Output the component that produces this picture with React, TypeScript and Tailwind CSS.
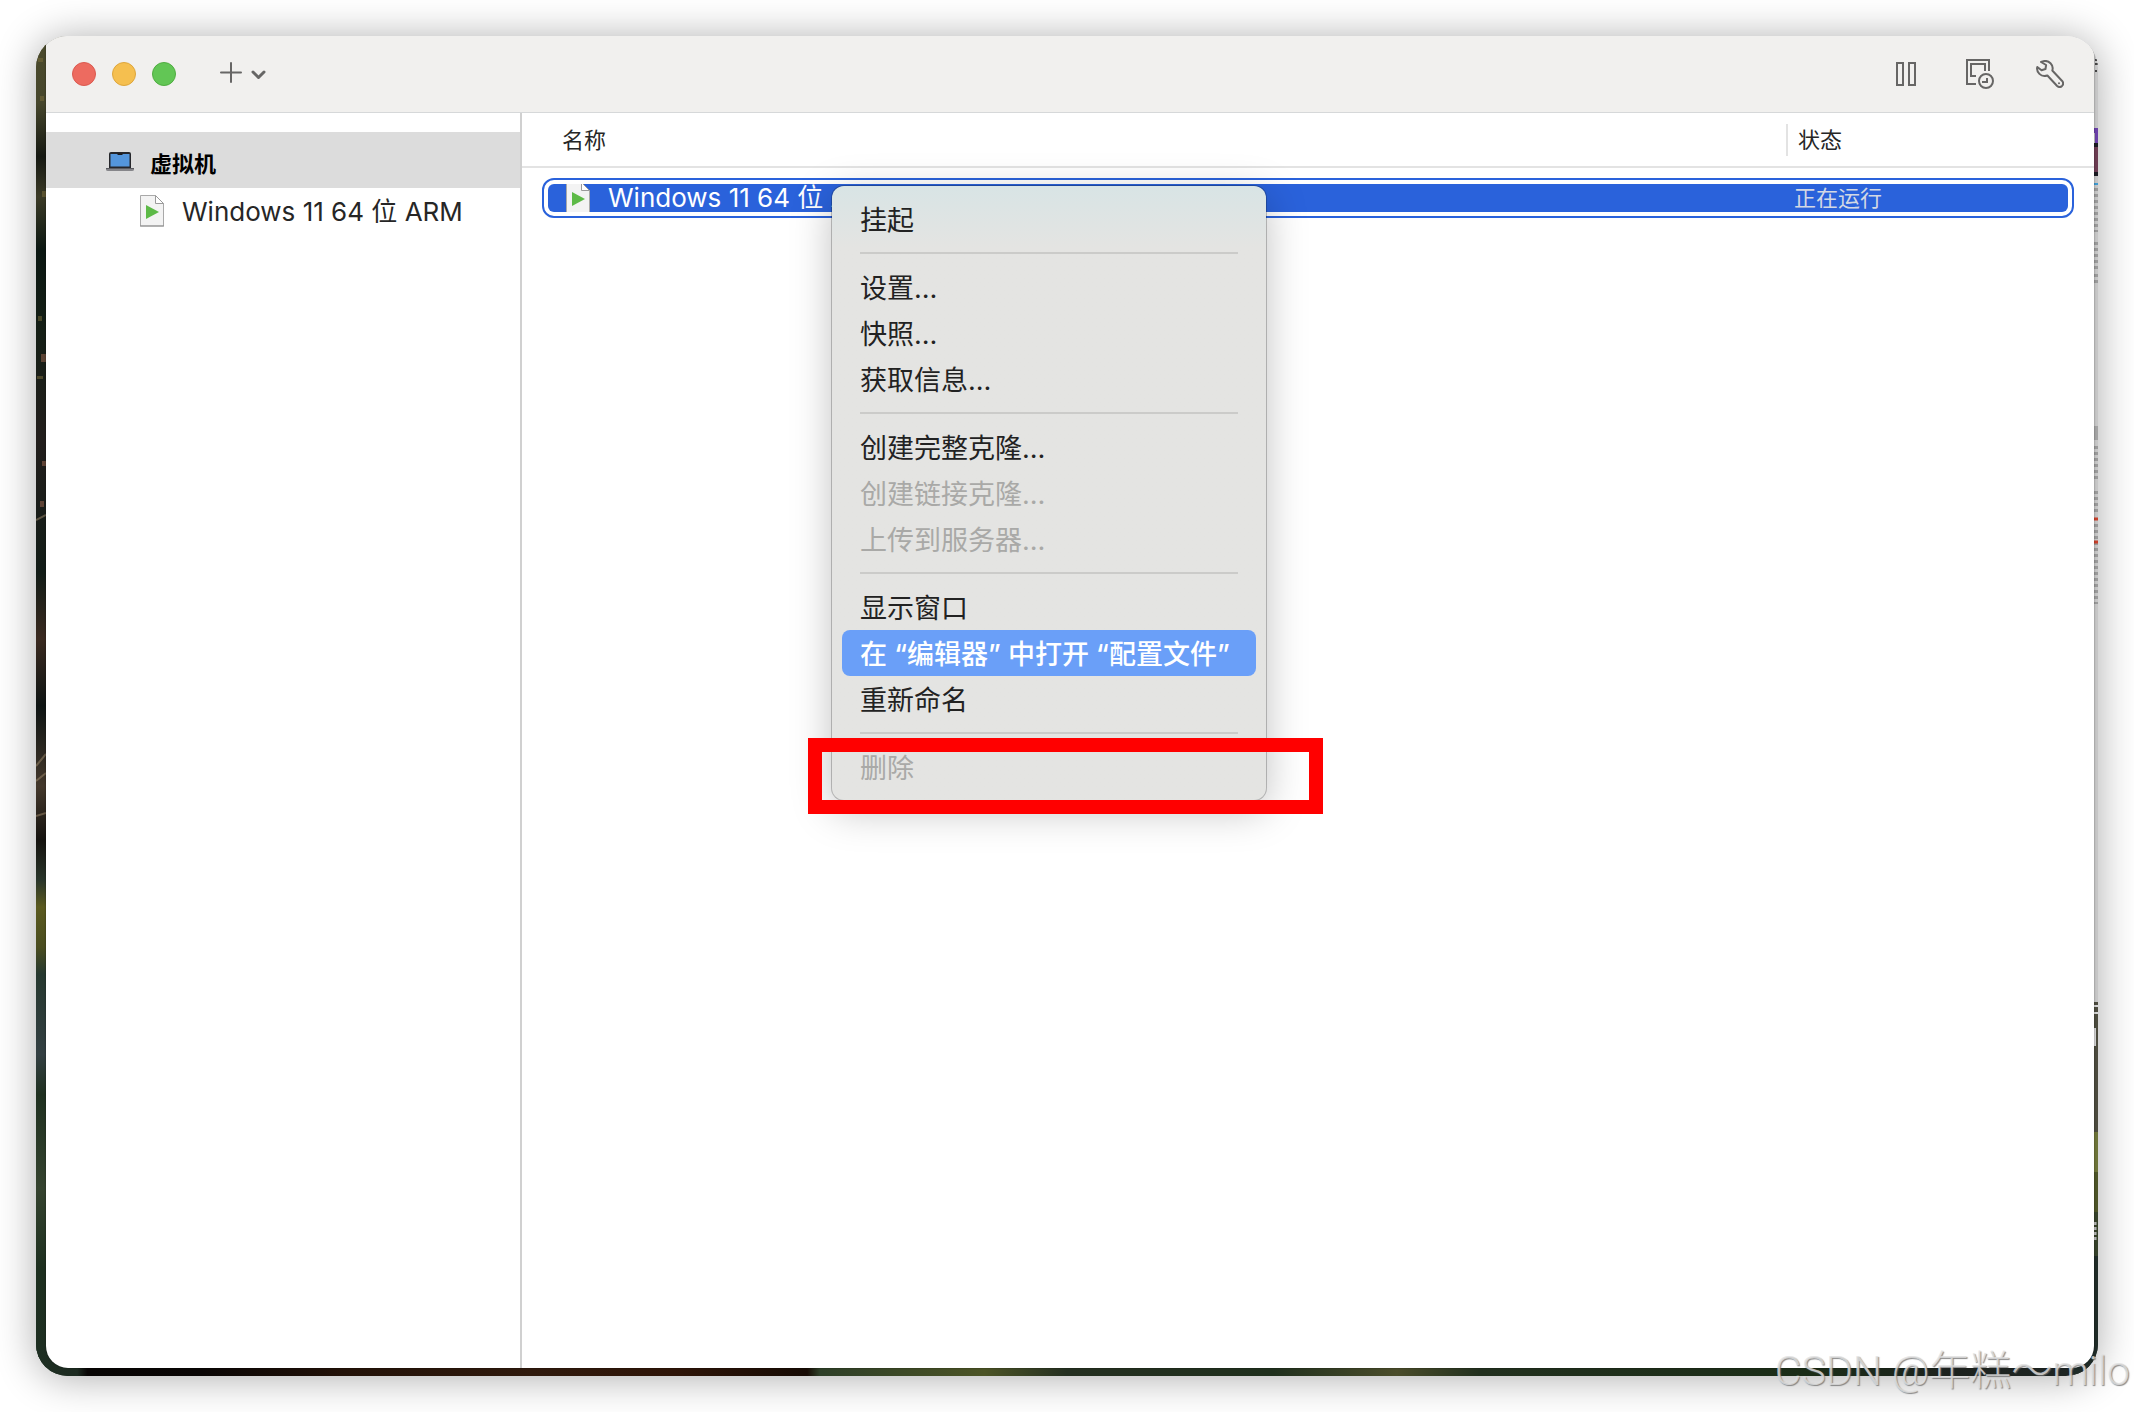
import { useState } from 'react'
import clsx from 'clsx'

type MenuItem = { label: string; disabled?: boolean }

const menuGroups: MenuItem[][] = [
  [{ label: '挂起' }],
  [{ label: '设置…' }, { label: '快照…' }, { label: '获取信息…' }],
  [
    { label: '创建完整克隆…' },
    { label: '创建链接克隆…', disabled: true },
    { label: '上传到服务器…', disabled: true },
  ],
  [{ label: '显示窗口' }, { label: '在 “编辑器” 中打开 “配置文件”' }, { label: '重新命名' }],
  [{ label: '删除', disabled: true }],
]

function LaptopIcon() {
  return (
    <svg width="28" height="20" viewBox="0 0 28 20" className="shrink-0">
      <rect x="3" y="0" width="22" height="18" rx="2" fill="#26272b" />
      <rect x="4.5" y="2" width="19" height="12.5" fill="#5496dc" />
      <rect x="11.5" y="1.5" width="5" height="1.5" fill="#1a1b1e" />
      <path d="M0 16.5h28v1q0 1.5-2 1.5H2q-2 0-2-1.5z" fill="#86868a" />
      <path d="M0 16.5h28" stroke="#5b5b60" />
    </svg>
  )
}

function VmFileIcon() {
  return (
    <svg width="24" height="32" viewBox="0 0 24 32" className="shrink-0">
      <path d="M.5.5h15l8 8v22.5H.5z" fill="#f3f3f3" stroke="#a9a9a9" />
      <path d="M15.5.5v8h8z" fill="#fff" stroke="#9a9a9a" strokeLinejoin="round" />
      <path d="M0 31h24" stroke="#8d8d8d" />
      <path d="M6 10l13 7-13 7z" fill="#5dba47" />
    </svg>
  )
}

function PauseIcon() {
  return (
    <svg width="20" height="24" viewBox="0 0 20 24" fill="none" stroke="currentColor" strokeWidth="2">
      <path d="M1 1h6v22H1zM13 1h6v22h-6z" />
    </svg>
  )
}

function SnapshotIcon() {
  return (
    <svg width="28" height="30" viewBox="0 0 28 30" fill="none" stroke="currentColor" strokeWidth="2">
      <path d="M10 25H1V1h22v11" />
      <path d="M10 17H5V5h14v7" />
      <circle cx="20" cy="22" r="7" />
      <path d="M21 19v4h-5" />
    </svg>
  )
}

function WrenchIcon() {
  return (
    <svg width="28" height="28" viewBox="0 0 28 28" fill="none" stroke="currentColor" strokeWidth="2" strokeLinejoin="round">
      <path d="M5 2C8 .6 12 .8 14.5 3.2c2.2 2.2 2.6 4.8 1.8 7.3l9.6 10.2c1.5 1.7 1.5 3.8.1 5.2-1.5 1.4-3.6 1.3-5.1-.2L11.4 15.5C8.5 16.5 5.5 16 3.4 13.9 1.3 11.8.6 9.5 1.3 7l4.2 3.2 4-1.2.6-4z" />
      <circle cx="23" cy="23.3" r="1" fill="currentColor" stroke="none" />
    </svg>
  )
}

// desktop picture peeking out around the window
function Wallpaper() {
  return (
    <>
      <div className="absolute inset-y-0 left-0 w-10 bg-linear-to-b from-[#4a4a2c] via-[#11100f] to-[#1d2f20]" />
      <svg className="absolute inset-y-0 left-0 h-full w-[10px]" viewBox="0 0 10 1340" preserveAspectRatio="none">
        <defs>
          <linearGradient id="leaves" x2="0" y2="1">
            <stop offset="0" stopColor="#4c4c2d" />
            <stop offset=".05" stopColor="#46462c" />
            <stop offset=".09" stopColor="#151812" />
            <stop offset=".12" stopColor="#3b3a26" />
            <stop offset=".16" stopColor="#0b1712" />
            <stop offset=".22" stopColor="#151f16" />
            <stop offset=".3" stopColor="#221e1c" />
            <stop offset=".4" stopColor="#121c17" />
            <stop offset=".45" stopColor="#3a2a20" />
            <stop offset=".5" stopColor="#0e1413" />
            <stop offset=".56" stopColor="#44382c" />
            <stop offset=".6" stopColor="#15130f" />
            <stop offset=".63" stopColor="#29352a" />
            <stop offset=".65" stopColor="#5b5a1f" />
            <stop offset=".68" stopColor="#4a4d20" />
            <stop offset=".7" stopColor="#26382f" />
            <stop offset=".76" stopColor="#333f42" />
            <stop offset=".79" stopColor="#1f3020" />
            <stop offset=".86" stopColor="#35432f" />
            <stop offset=".92" stopColor="#1d2f1f" />
            <stop offset="1" stopColor="#1e2e22" />
          </linearGradient>
        </defs>
        <rect width="10" height="1340" fill="url(#leaves)" />
        <g opacity=".5">
          <path d="M2 22h5v4H2zM4 60h4v5H4zM6 155h4v6H6zM2 280h4v5H2zM1 340h6v3H1z" fill="#7b6e3b" />
          <path d="M5 318h5v8H5zM6 425h4v5H6zM4 465h4v6H4z" fill="#a06a52" />
          <path d="M0 484l10-5M0 730l10-12M0 745l10-8M0 780l10-3" stroke="#a08b6c" strokeWidth="2" />
        </g>
      </svg>
      <svg className="absolute bottom-0 left-0 h-8 w-full" viewBox="0 0 2062 32" preserveAspectRatio="none">
        <defs>
          <linearGradient id="ground">
            <stop offset="0" stopColor="#1e2f22" />
            <stop offset=".02" stopColor="#1d2b21" />
            <stop offset=".025" stopColor="#080504" />
            <stop offset=".08" stopColor="#0a0605" />
            <stop offset=".15" stopColor="#231208" />
            <stop offset=".24" stopColor="#301a0d" />
            <stop offset=".31" stopColor="#2f1508" />
            <stop offset=".374" stopColor="#170b04" />
            <stop offset=".38" stopColor="#2e3f28" />
            <stop offset=".46" stopColor="#4c5426" />
            <stop offset=".5" stopColor="#253021" />
            <stop offset=".6" stopColor="#20301d" />
            <stop offset=".66" stopColor="#4b4d2b" />
            <stop offset=".7" stopColor="#22301e" />
            <stop offset=".86" stopColor="#1b2d17" />
            <stop offset=".93" stopColor="#1d221e" />
            <stop offset="1" stopColor="#1f2725" />
          </linearGradient>
        </defs>
        <rect width="2062" height="32" fill="url(#ground)" />
      </svg>
      <svg className="absolute top-0 right-0 h-full w-6" viewBox="0 0 24 1340" preserveAspectRatio="none">
        <rect width="24" height="970" fill="#c6c6c6" />
        <path d="M21 24h3M21 28h3M21 35h2" stroke="#444" strokeWidth="2" />
        <path d="M20 92h4v20h-3V97h-1z" fill="#6a3fa8" />
        <rect x="20" y="107" width="4" height="30" fill="#6c3c52" />
        <path d="M20 109h4M20 138h4" stroke="#1b1b22" strokeWidth="4" />
        <path d="M20 148h4" stroke="#3f9ad0" strokeWidth="2" />
        <path d="M22 152v44M22 206v28M22 238v10M22 410v34M22 455v24M22 488v80" stroke="#9a9a9a" strokeWidth="4" strokeDasharray="3 3" />
        <rect x="20" y="390" width="4" height="14" fill="#a3a3a3" />
        <path d="M20 483h4M20 506h4" stroke="#c9402b" strokeWidth="3" />
        <rect y="966" width="24" height="340" fill="#4c4b3e" />
        <path d="M20 970h4M20 977h4M21 992v18" stroke="#d5d5d5" strokeWidth="2" />
        <rect y="1096" width="24" height="40" fill="#6d7438" />
        <rect y="1136" width="24" height="40" fill="#4d5427" />
        <rect y="1176" width="24" height="44" fill="#36412a" />
        <path d="M21 1186v18" stroke="#b8b8b8" strokeWidth="3" strokeDasharray="3 2" />
        <rect y="1220" width="24" height="120" fill="#1f2b27" />
      </svg>
    </>
  )
}

function ContextMenu() {
  const [active, setActive] = useState('在 “编辑器” 中打开 “配置文件”')

  return (
    <div
      role="menu"
      className="absolute top-[150px] left-[786px] w-[434px] rounded-xl bg-[#e4e4e2] bg-linear-to-b from-[#d8e4e5] to-[#e4e4e2] to-10% p-[10px] shadow-[0_0_0_1px_rgba(0,0,0,0.22),0_10px_40px_rgba(0,0,0,0.25)]"
    >
      {menuGroups.map((group, i) => (
        <div key={i}>
          {i > 0 && <hr className="mx-[18px] my-[10px] h-[2px] border-0 bg-[#cbcbc9]" />}
          {group.map((item) => (
            <button
              key={item.label}
              type="button"
              role="menuitem"
              disabled={item.disabled}
              onMouseEnter={() => setActive(item.label)}
              className={clsx(
                'block h-[46px] w-full rounded-lg px-[18px] pt-1 text-left text-[27px] leading-[42px] whitespace-nowrap',
                item.disabled && 'text-[#a9a9a7]',
                !item.disabled && active === item.label && 'bg-[#6a9ff8] font-medium text-white',
                !item.disabled && active !== item.label && 'text-[#222]',
              )}
            >
              {item.label}
            </button>
          ))}
        </div>
      ))}
      {/* red marker around the delete entry */}
      <div className="pointer-events-none absolute top-[552px] -left-6 h-[76px] w-[515px] border-[14px] border-[#ff0000]" />
    </div>
  )
}

export default function App() {
  return (
    <div className="relative flex h-screen overflow-hidden bg-white p-9 font-['Inter','Noto_Sans_CJK_SC',sans-serif] text-[#262626]">
      <div className="relative flex flex-1 overflow-hidden rounded-[32px] pr-1 pb-2 pl-[10px] shadow-[0_2px_40px_rgba(0,0,0,0.33)]">
        <Wallpaper />

        <div className="relative flex flex-1 flex-col overflow-hidden rounded-[22px] rounded-tl-[10px] bg-white shadow-[0_0_2px_rgba(0,0,0,0.5)]">
          <header className="flex h-[77px] shrink-0 items-center border-b border-[#d6d8d9] bg-[#f1f0ee] pr-[30px] pl-[26px] text-[#676665]">
            <div className="flex gap-4">
              <button type="button" aria-label="关闭" className="size-6 rounded-full border border-[#db5a50] bg-[#ed6b60]" />
              <button type="button" aria-label="最小化" className="size-6 rounded-full border border-[#dea63c] bg-[#f5bf4f]" />
              <button type="button" aria-label="缩放" className="size-6 rounded-full border border-[#50ad41] bg-[#62c655]" />
            </div>
            <button type="button" aria-label="添加" className="ml-[43px]">
              <svg width="48" height="24" viewBox="0 0 48 24" fill="none" stroke="currentColor" strokeLinecap="round">
                <path d="M12 1v19M2 10.5h20" strokeWidth="2" />
                <path d="M34 10l5.5 5.500L45 10" strokeWidth="3" strokeLinejoin="round" />
              </svg>
            </button>
            <div className="ml-auto flex items-center">
              <button type="button" aria-label="挂起" className="mr-[50px]">
                <PauseIcon />
              </button>
              <button type="button" aria-label="快照" className="mr-[42px]">
                <SnapshotIcon />
              </button>
              <button type="button" aria-label="设置">
                <WrenchIcon />
              </button>
            </div>
          </header>

          <div className="flex min-h-0 flex-1">
            <aside className="w-[476px] shrink-0 border-r-2 border-[#d0d0d0] pt-[19px]">
              <div className="flex h-14 items-center gap-4 bg-[#dcdcdc] pt-1 pl-[60px]">
                <LaptopIcon />
                <span className="pt-1 text-[22px] font-bold text-black">虚拟机</span>
              </div>
              <a href="#vm" className="flex h-[46px] items-center gap-[18px] pl-[94px] text-[26px]">
                <VmFileIcon />
                Windows 11 64 位 ARM
              </a>
            </aside>

            <main className="min-w-0 flex-1">
              <table className="block">
                <thead className="block border-b-2 border-[#e3e3e3] text-[22px] leading-8">
                  <tr className="grid h-[53px] grid-cols-[1fr_308px] items-center">
                    <th className="pl-[40px] text-left font-normal">名称</th>
                    <th className="border-l-2 border-[#e3e3e3] pl-[10px] text-left font-normal">状态</th>
                  </tr>
                </thead>
                <tbody className="block px-[26px] pt-4">
                  <tr className="grid h-7 grid-cols-[1fr_282px] rounded-md bg-[#2a62db] outline-2 outline-offset-4 outline-[#2a62db]">
                    <td className="flex h-7 items-center gap-[18px] pl-[18px] text-[26px] leading-7 text-white">
                      <span className="flex h-7 items-center overflow-hidden">
                        <VmFileIcon />
                      </span>
                      Windows 11 64 位 ARM
                    </td>
                    <td className="pl-2 text-[22px] leading-7 text-[#d3d8e4]">正在运行</td>
                  </tr>
                </tbody>
              </table>
            </main>
          </div>

          <ContextMenu />
        </div>
      </div>

      <p className="absolute right-1 bottom-3 font-['Roboto','Noto_Sans_CJK_SC',sans-serif] text-[41px] leading-[58px] font-light whitespace-nowrap text-[#e2e2e2]/80 [text-shadow:1px_1px_1px_rgba(110,110,110,0.8)]">
        CSDN @年糕～milo
      </p>
    </div>
  )
}
